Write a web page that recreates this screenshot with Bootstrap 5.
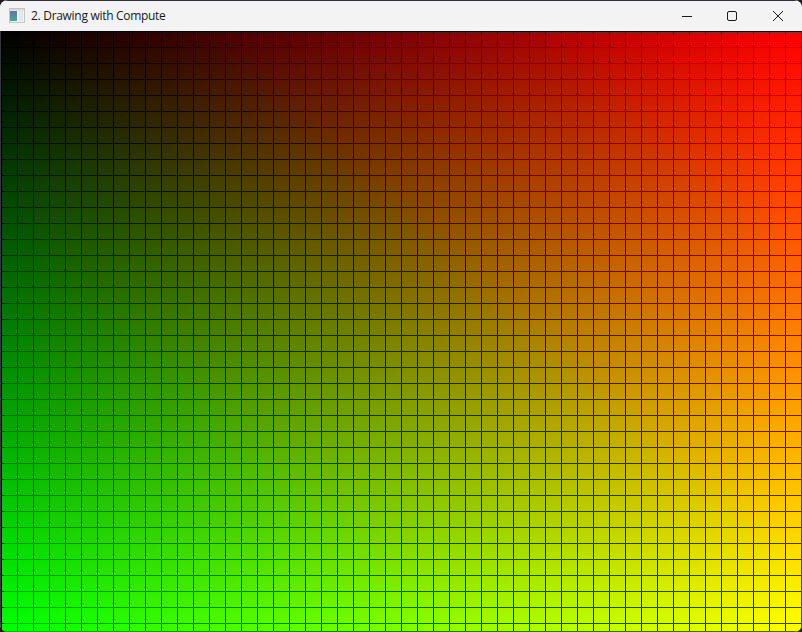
<!DOCTYPE html>
<html lang="en">
<head>
<meta charset="utf-8">
<title>2. Drawing with Compute</title>
<link href="https://cdn.jsdelivr.net/npm/bootstrap@5.3.0/dist/css/bootstrap.min.css" rel="stylesheet">
<style>
html, body { margin: 0; height: 632px; background: #1c1c20; overflow: hidden; }
.app-window { width: 802px; height: 632px; border-radius: 8px; overflow: hidden; background: #f3f3f3; }
.title-strip { height: 31px; background: #f3f3f3; border-top: 1px solid #2e3138; padding-left: 9px; padding-right: 1px; font-family: "Open Sans", "Noto Sans", sans-serif; font-size: 12px; color: #1a1a1a; }
.title-strip .label-text { margin-left: 6px; letter-spacing: -0.3px; }
.win-btn { width: 46px; height: 30px; }
.win-btn-first { width: 44px; }
.canvas-wrap { padding: 0 1px 1px; background: #33363c; height: 601px; }
.draw-surface {
  width: 800px; height: 600px;
  background-image:
    linear-gradient(to right, #000 1px, transparent 1px),
    linear-gradient(to bottom, #000 1px, transparent 1px),
    linear-gradient(to right, #000, #f00),
    linear-gradient(to bottom, #000, #0f0);
  background-size: 16px 16px, 16px 16px, 100% 100%, 100% 100%;
  background-blend-mode: normal, normal, screen, normal;
}
</style>
</head>
<body>
<div class="app-window d-flex flex-column">
  <div class="title-strip d-flex align-items-center">
    <svg width="16" height="16" viewBox="0 0 16 16" aria-hidden="true">
      <defs>
        <linearGradient id="panelFill" x1="0" y1="0" x2="0" y2="1">
          <stop offset="0" stop-color="#4a80b8"/>
          <stop offset="1" stop-color="#52a47c"/>
        </linearGradient>
      </defs>
      <rect x="0.5" y="0.5" width="15" height="14" fill="#f0f2f3" stroke="#c2c6c9"/>
      <rect x="1" y="1" width="14" height="1.5" fill="#d2d6d8"/>
      <rect x="1" y="3" width="7" height="10" fill="url(#panelFill)"/>
      <rect x="10" y="3" width="4" height="10" fill="#e0eae5"/>
    </svg>
    <span class="label-text">2. Drawing with Compute</span>
    <div class="ms-auto d-flex">
      <div class="win-btn win-btn-first d-flex align-items-center justify-content-center">
        <svg width="10" height="10" viewBox="0 0 10 10" aria-hidden="true"><path d="M0 5.5H10" stroke="#1a1a1a" fill="none"/></svg>
      </div>
      <div class="win-btn d-flex align-items-center justify-content-center">
        <svg width="10" height="10" viewBox="0 0 10 10" aria-hidden="true"><rect x="0.5" y="0.5" width="9" height="9" rx="1.5" stroke="#1a1a1a" fill="none"/></svg>
      </div>
      <div class="win-btn d-flex align-items-center justify-content-center">
        <svg width="10" height="10" viewBox="0 0 10 10" aria-hidden="true"><path d="M0 0L10 10M10 0L0 10" stroke="#1a1a1a" fill="none"/></svg>
      </div>
    </div>
  </div>
  <div class="canvas-wrap">
    <div class="draw-surface"></div>
  </div>
</div>
<script src="https://cdn.jsdelivr.net/npm/bootstrap@5.3.0/dist/js/bootstrap.bundle.min.js"></script>
</body>
</html>
